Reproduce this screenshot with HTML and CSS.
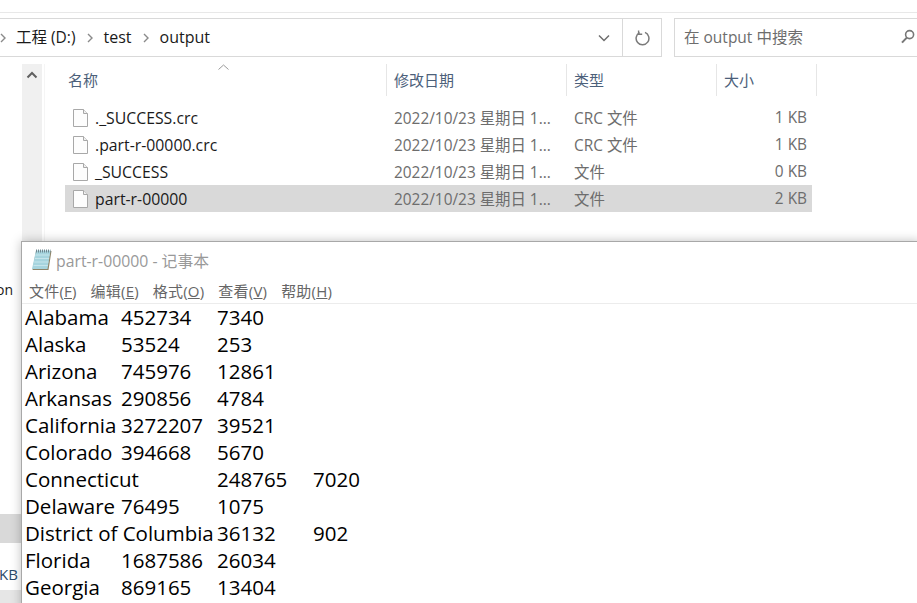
FILE: index.html
```html
<!DOCTYPE html>
<html lang="zh">
<head>
<meta charset="utf-8">
<title>part-r-00000 - 记事本</title>
<link rel="stylesheet" href="styles.css">
</head>
<body>
<div class="explorer">
  <div class="toolbar">
    <div class="address">
      <div class="crumbs">
        <svg class="sep first" width="6" height="10" viewBox="0 0 6 10"><path d="M1 1l4 4-4 4" fill="none" stroke="#8a8a8a" stroke-width="1.4"/></svg>
        <span class="drive">工程 (D:)</span>
        <svg class="sep" width="6" height="10" viewBox="0 0 6 10"><path d="M1 1l4 4-4 4" fill="none" stroke="#8a8a8a" stroke-width="1.4"/></svg>
        <span>test</span>
        <svg class="sep" width="6" height="10" viewBox="0 0 6 10"><path d="M1 1l4 4-4 4" fill="none" stroke="#8a8a8a" stroke-width="1.4"/></svg>
        <span>output</span>
      </div>
      <div class="drop">
        <svg width="12" height="8" viewBox="0 0 12 8"><path d="M1 1.5l5 5 5-5" fill="none" stroke="#6e6e6e" stroke-width="1.5"/></svg>
      </div>
      <div class="refresh">
        <svg width="16" height="16" viewBox="0 0 16 16"><path d="M5.6 2.600A6.400 6.400 0 1 0 11 2.400" fill="none" stroke="#7a7a7a" stroke-width="1.5"/><path d="M4.600 0.600v3.600h3.600" fill="none" stroke="#7a7a7a" stroke-width="1.400"/></svg>
      </div>
    </div>
    <div class="search">
      <span>在 output 中搜索</span>
      <svg width="14" height="15" viewBox="0 0 14 15"><circle cx="8.600" cy="5.600" r="4" fill="none" stroke="#777" stroke-width="1.600"/><path d="M5.800 8.600L1 13.600" stroke="#777" stroke-width="2"/></svg>
    </div>
  </div>
  <div class="main">
    <aside class="side">
      <div class="side-text on">on</div>
      <div class="side-sel"></div>
      <div class="side-text kb">KB</div>
      <div class="side-foot"></div>
    </aside>
    <div class="scroll">
      <svg width="12" height="8" viewBox="0 0 12 8"><path d="M1.500 6.500L6 2l4.500 4.500" fill="none" stroke="#606060" stroke-width="2"/></svg>
    </div>
    <section class="files">
      <div class="head">
        <div class="hcol h1">名称<svg class="caret" width="11" height="6" viewBox="0 0 11 6"><path d="M0.500 5.500L5.500 1l5 4.500" fill="none" stroke="#9a9a9a"/></svg></div>
        <div class="hcol h2">修改日期</div>
        <div class="hcol h3">类型</div>
        <div class="hcol h4">大小</div>
      </div>
      <div class="rows">
        <div class="row"><div class="name"><svg class="ficon" width="15" height="18" viewBox="0 0 15 18"><path d="M.5.500h10l4 4v13H.5z" fill="#fdfdfd" stroke="#a8a8a8"/><path d="M10.500.500v4h4" fill="#f0f0f0" stroke="#a8a8a8"/></svg>._SUCCESS.crc</div><div class="date">2022/10/23 星期日 1...</div><div class="type">CRC 文件</div><div class="size">1 KB</div></div>
        <div class="row"><div class="name"><svg class="ficon" width="15" height="18" viewBox="0 0 15 18"><path d="M.5.500h10l4 4v13H.5z" fill="#fdfdfd" stroke="#a8a8a8"/><path d="M10.500.500v4h4" fill="#f0f0f0" stroke="#a8a8a8"/></svg>.part-r-00000.crc</div><div class="date">2022/10/23 星期日 1...</div><div class="type">CRC 文件</div><div class="size">1 KB</div></div>
        <div class="row"><div class="name"><svg class="ficon" width="15" height="18" viewBox="0 0 15 18"><path d="M.5.500h10l4 4v13H.5z" fill="#fdfdfd" stroke="#a8a8a8"/><path d="M10.500.500v4h4" fill="#f0f0f0" stroke="#a8a8a8"/></svg>_SUCCESS</div><div class="date">2022/10/23 星期日 1...</div><div class="type">文件</div><div class="size">0 KB</div></div>
        <div class="row selected"><div class="name"><svg class="ficon" width="15" height="18" viewBox="0 0 15 18"><path d="M.5.500h10l4 4v13H.5z" fill="#fdfdfd" stroke="#a8a8a8"/><path d="M10.500.500v4h4" fill="#f0f0f0" stroke="#a8a8a8"/></svg>part-r-00000</div><div class="date">2022/10/23 星期日 1...</div><div class="type">文件</div><div class="size">2 KB</div></div>
      </div>
    </section>
  </div>
</div>
<div class="notepad">
  <div class="np-title">
    <svg width="21" height="22" viewBox="0 0 21 22"><path d="M5 2h15.500L17.500 21H1.500z" fill="#8f8468"/><path d="M5 1.500h14.500L16.500 20H1z" fill="#a6d4de"/><path d="M4.400 6h14.300M3.800 9.500h14.300M3.200 13h14.300M2.600 16.500h14.300" stroke="#c6e5ec" stroke-width="1.200"/><path d="M5 2h14.500" stroke="#6f8790" stroke-width="3" stroke-dasharray="1 1"/></svg>
    <span>part-r-00000 - 记事本</span>
  </div>
  <div class="np-menu">
    <span>文件(<u>F</u>)</span><span>编辑(<u>E</u>)</span><span>格式(<u>O</u>)</span><span>查看(<u>V</u>)</span><span>帮助(<u>H</u>)</span>
  </div>
  <pre class="np-text">Alabama	452734	7340
Alaska	53524	253
Arizona	745976	12861
Arkansas	290856	4784
California	3272207	39521
Colorado	394668	5670
Connecticut	248765	7020
Delaware	76495	1075
District of Columbia	36132	902
Florida	1687586	26034
Georgia	869165	13404</pre>
</div>
</body>
</html>
```
FILE: styles.css
```css
* { box-sizing: border-box; }
html, body { margin: 0; height: 100%; }
body {
  position: relative;
  width: 917px;
  height: 603px;
  overflow: hidden;
  background: #fff;
  font-family: "Open Sans", "Noto Sans CJK SC", sans-serif;
  font-size: 15px;
  color: #1a1a1a;
}
.explorer { padding-top: 12px; height: 603px; display: flex; flex-direction: column; }
.toolbar {
  border-top: 1px solid #e8e8e8;
  padding-top: 5px;
  display: flex;
  gap: 12px;
  height: 44px;
  flex: none;
}
.address {
  width: 663px;
  height: 39px;
  margin-left: -1px;
  flex: none;
  display: flex;
  border: 1px solid #d9d9d9;
  border-left: 0;
}
.crumbs { flex: 1; display: flex; align-items: center; padding: 0 0 2px 1px; font-size: 16px; }
.drive { font-size: 15.500px; }
.sep { margin: 2px 11px 0 11px; flex: none; }
.sep.first { margin: 2px 10px 0 0; }
.drop { width: 39px; display: flex; align-items: center; justify-content: center; padding-left: 2px; }
.refresh { width: 39px; border-left: 1px solid #d9d9d9; display: flex; align-items: center; justify-content: center; }
.search {
  width: 245px;
  height: 39px;
  flex: none;
  border: 1px solid #d9d9d9;
  border-right: 0;
  display: flex;
  align-items: center;
  justify-content: space-between;
  padding: 0 4px 2px 9px;
  font-size: 15.500px;
  color: #6d6d6d;
}
.main { flex: 1; display: flex; padding-top: 8px; min-height: 0; }
.side { width: 22px; flex: none; display: flex; flex-direction: column; }
.side-text { font-size: 14px; line-height: 20px; }
.on { margin: 216px 0 0 -4px; }
.side-sel { margin-top: 214px; height: 29px; background: #d9d9d9; }
.kb { margin: 21px 0 0 -1px; color: #2a4a6a; font-size: 15px; }
.side-foot { margin-top: 6px; flex: 1; background: #e6e6e6; }
.scroll { width: 20px; flex: none; height: 539px; background: #f0f0f0; display: flex; justify-content: center; padding-top: 7px; }
.files { flex: 1; margin-left: 2px; border-left: 1px solid #f5f5f5; }
.head { display: flex; height: 32px; }
.hcol { border-right: 1px solid #e6e6e6; font-size: 15px; line-height: 32px; color: #4c607a; padding-left: 7px; position: relative; }
.h1 { width: 342px; padding-left: 23px; }
.h2 { width: 180px; }
.h3 { width: 150px; }
.h4 { width: 100px; }
.caret { position: absolute; left: 173px; top: 0; }
.rows { margin: 8px 0 0 20px; width: 747px; }
.row {
  display: grid;
  grid-template-columns: 321px 180px 150px 91px;
  height: 27px;
  align-items: center;
  font-size: 15.400px;
  color: #6d6d6d;
}
.selected { background: #d9d9d9; }
.name { display: flex; align-items: center; color: #1a1a1a; padding-left: 8px; font-size: 15.800px; }
.ficon { margin-right: 7px; flex: none; }
.date, .type { padding-left: 8px; }
.size { text-align: right; }
.notepad {
  position: absolute;
  left: 21px;
  top: 241px;
  width: 900px;
  height: 370px;
  background: #fff;
  border: 1px solid #a8a8a8;
  box-shadow: 0 0 10px rgba(0,0,0,.25);
}
.np-title { height: 36px; display: flex; align-items: center; gap: 4px; padding-left: 9px; font-size: 15.800px; color: #999; }
.np-menu { height: 26px; display: flex; gap: 14px; padding: 0 0 1px 7px; font-size: 15px; letter-spacing: .2px; color: #666; border-bottom: 1px solid #ececec; align-items: center; }
.np-text {
  margin: 0;
  padding: 0 0 0 3px;
  font-family: "Open Sans", "Noto Sans CJK SC", sans-serif;
  font-size: 20.500px;
  line-height: 27px;
  tab-size: 96px;
  color: #000;
}
```
